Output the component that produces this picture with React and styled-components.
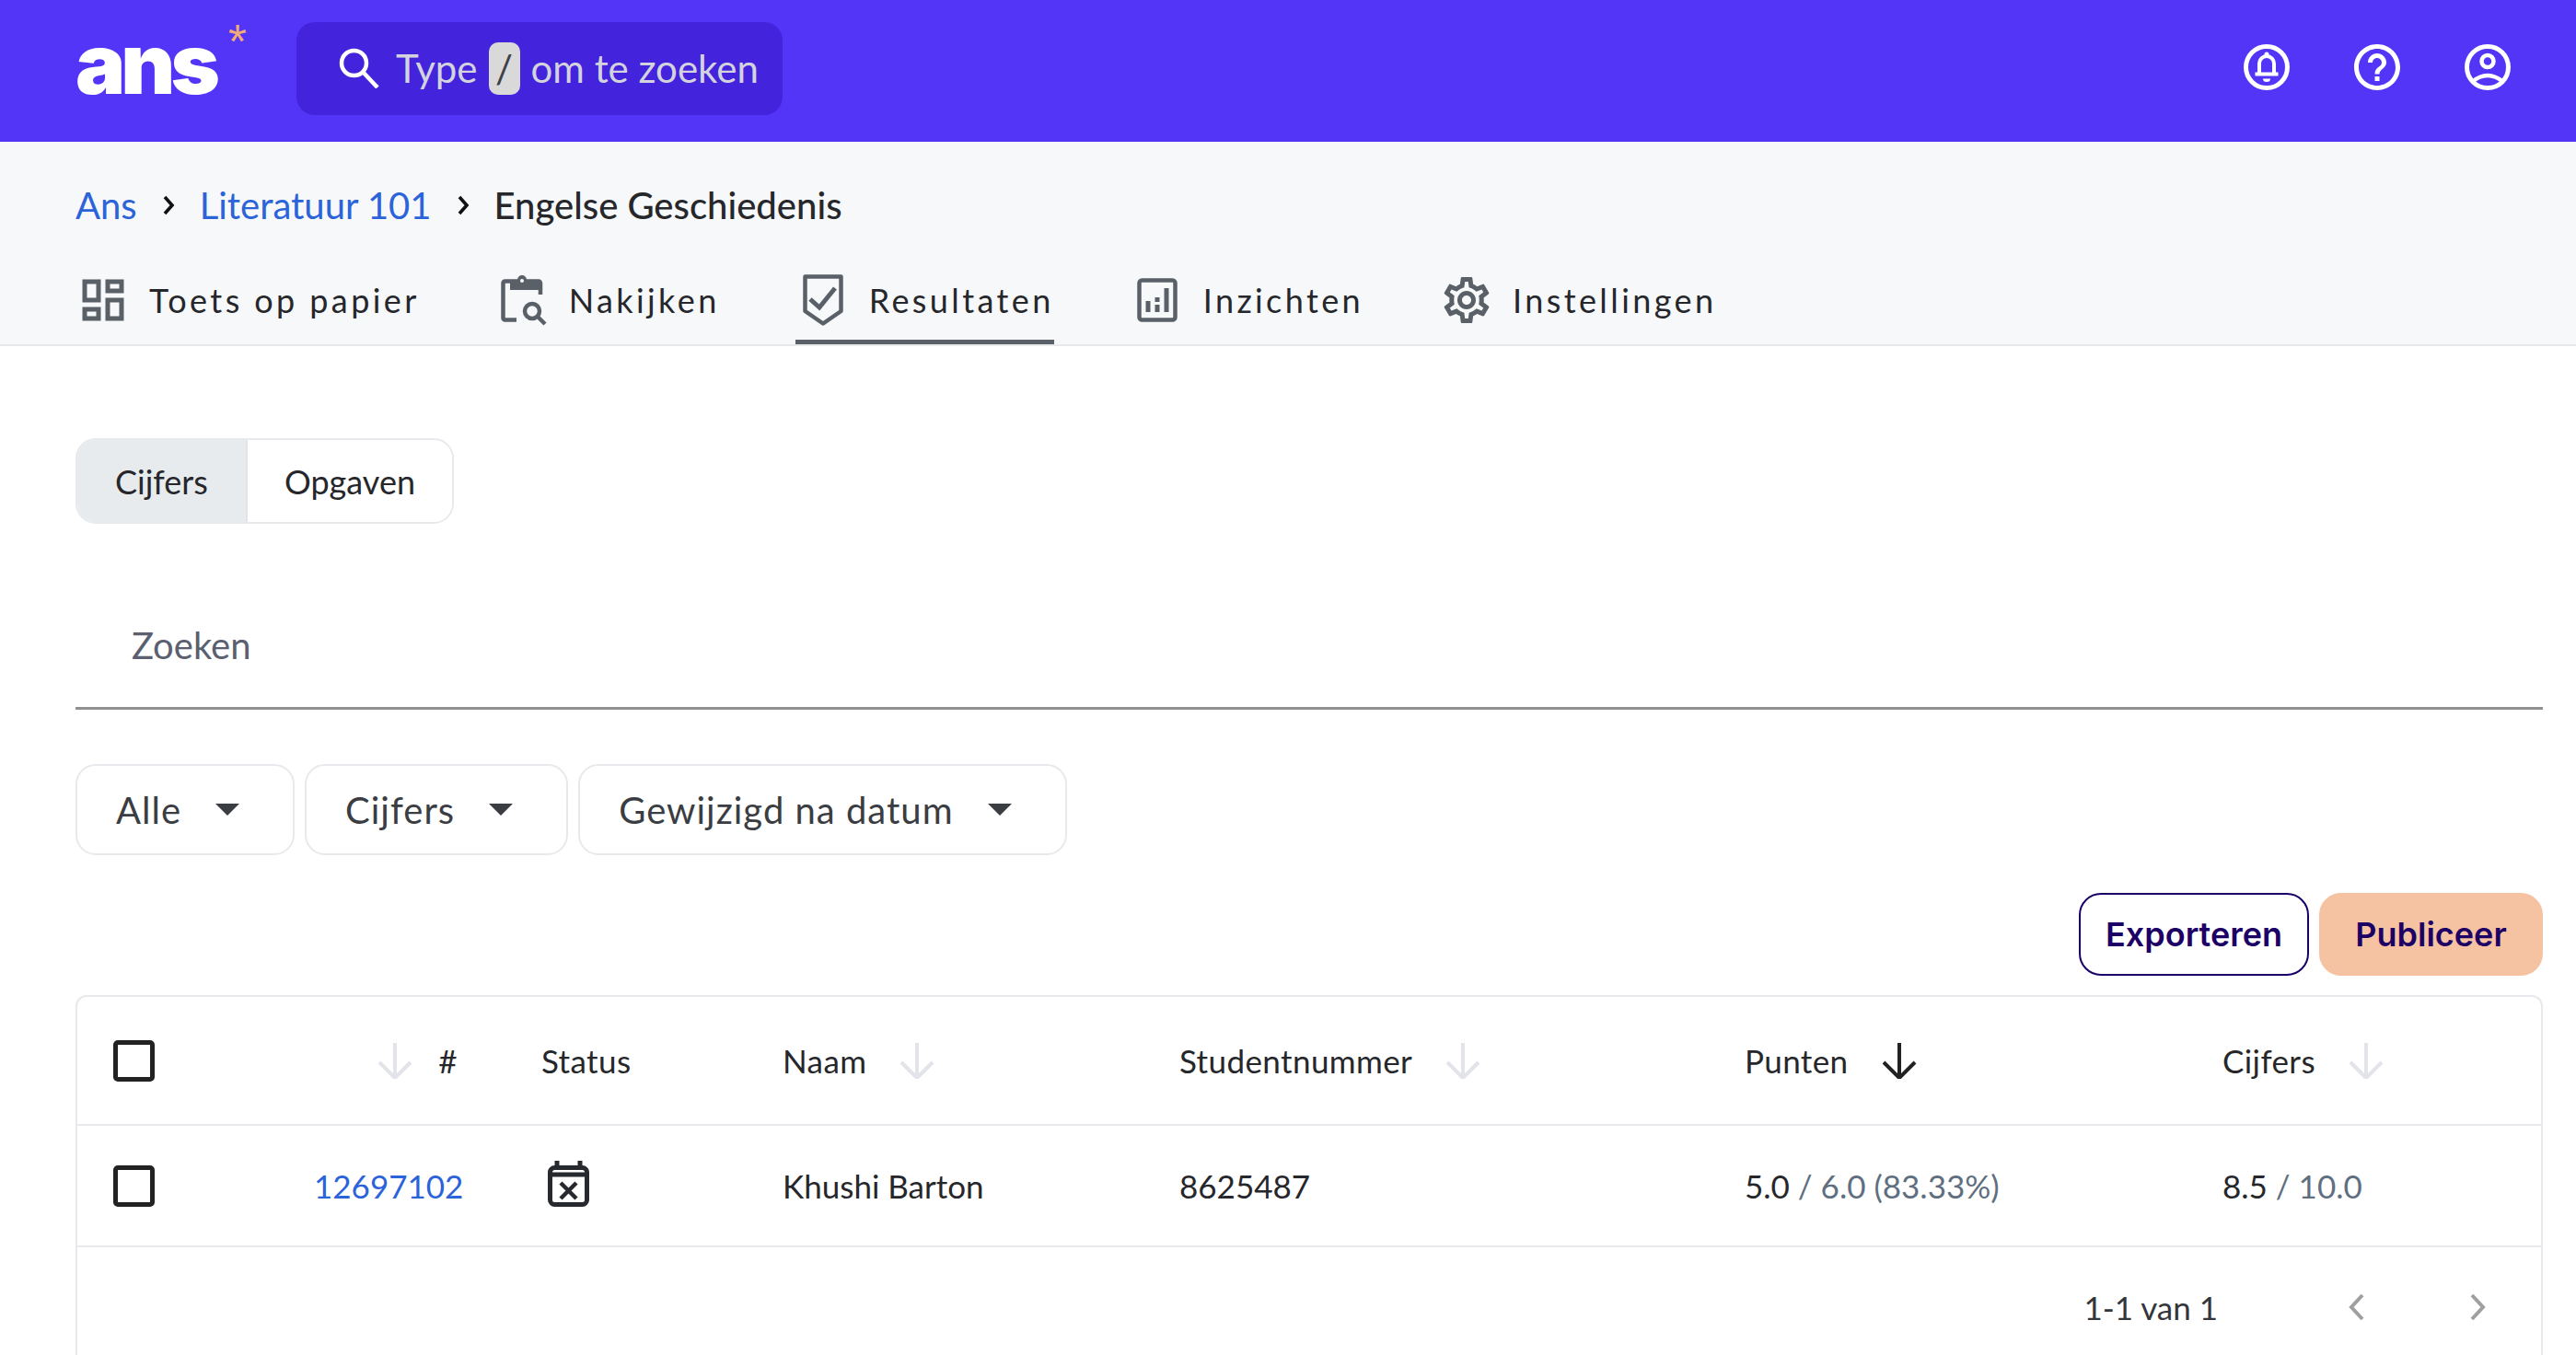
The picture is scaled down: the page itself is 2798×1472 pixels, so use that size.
import styled, { createGlobalStyle } from "styled-components";

const GlobalStyle = createGlobalStyle`
    html, body {
        margin: 0;
        padding: 0;
        background: #ffffff;
    }
    * {
        box-sizing: border-box;
    }
`;

const columns = "218px 247px 262px 431px 614px 519px 1fr";

/* Main page */
const Page = styled.div`
    width: 2798px;
    height: 1472px;
    overflow: hidden;
    font-family: "Lato", "Noto Sans", sans-serif;
    color: #26272b;
`;

/* Purple bar on top */
const TopBar = styled.header`
    display: flex;
    align-items: center;
    height: 154px;
    padding: 0 71px 0 82px;
    background-color: #5335f8;
`;

const Logo = styled.div`
    display: flex;
    align-items: flex-start;
    width: 240px;
    height: 76px;
    margin-top: -16px;
`;

const LogoText = styled.span`
    font-family: "Inter", sans-serif;
    font-size: 91px;
    font-weight: 900;
    line-height: 76px;
    letter-spacing: -5px;
    color: #ffffff;
`;

const LogoStar = styled.span`
    margin-left: 14px;
    margin-top: -16px;
    font-family: "Liberation Sans", sans-serif;
    font-size: 52px;
    line-height: 60px;
    color: #f2ab78;
`;

const SearchBox = styled.div`
    display: flex;
    align-items: center;
    width: 528px;
    height: 101px;
    margin-top: -6px;
    padding-left: 46px;
    border-radius: 20px;
    background-color: #4423dc;
    font-size: 42px;
    color: #d3d3de;
`;

const SearchHint = styled.span`
    margin-left: 18px;
`;

const KeyCap = styled.span`
    display: flex;
    align-items: center;
    justify-content: center;
    width: 34px;
    height: 57px;
    margin: 0 12px;
    border-radius: 10px;
    background-color: #d9d9d9;
    color: #3d4045;
    font-size: 42px;
`;

const TopIcons = styled.div`
    display: flex;
    gap: 70px;
    margin-left: auto;
    margin-top: -8px;
`;

const TopIcon = styled.svg`
    display: block;
    width: 50px;
    height: 50px;
    color: #ffffff;
`;

/* Grey part with breadcrumb and tabs */
const SubBar = styled.div`
    padding: 44px 0 0 82px;
    background-color: #f7f8fa;
    border-bottom: 2px solid #e8e9ea;
`;

const Breadcrumb = styled.nav`
    display: flex;
    align-items: center;
    height: 50px;
    margin-bottom: 40px;
    font-size: 40px;
`;

const Crumb = styled.a`
    color: #2b63d9;
`;

const CurrentCrumb = styled.span`
    font-weight: 500;
    color: #26272b;
`;

const CrumbArrow = styled.svg`
    display: block;
    width: 14px;
    height: 22px;
    margin: 0 27px;
`;

const Tabs = styled.div`
    display: flex;
    gap: 82px;
`;

const Tab = styled.div`
    display: flex;
    align-items: center;
    gap: 20px;
    padding: 8px 0 13px;
    border-bottom: 5px solid ${(properties) => (properties.$active ? "#5a6068" : "transparent")};
    font-size: 36px;
    letter-spacing: 3.4px;
    color: #26272b;
`;

const TabIcon = styled.svg`
    display: block;
    width: 60px;
    height: 60px;
    color: #5a6068;
`;

/* White content */
const Main = styled.main`
    padding: 100px 36px 0 82px;
`;

const Segments = styled.div`
    display: inline-flex;
    height: 93px;
    border: 2px solid #e8e9ec;
    border-radius: 22px;
    overflow: hidden;
    vertical-align: top;
`;

const Segment = styled.button`
    padding: 0 ${(properties) => (properties.$active ? "41px" : "40px")};
    border: none;
    border-right: ${(properties) => (properties.$active ? "2px solid #e1e3e6" : "none")};
    background-color: ${(properties) => (properties.$active ? "#e8ebee" : "#ffffff")};
    font-family: inherit;
    font-size: 36px;
    color: #26272b;
`;

const SearchInput = styled.input`
    display: block;
    width: 100%;
    height: 112px;
    margin-top: 90px;
    padding: 0 0 26px 61px;
    border: none;
    border-bottom: 3px solid #909090;
    outline: none;
    font-family: inherit;
    font-size: 40px;

    &::placeholder {
        color: #5a6070;
        opacity: 1;
    }
`;

const Filters = styled.div`
    display: flex;
    gap: 11px;
    margin-top: 59px;
`;

const Filter = styled.button`
    display: flex;
    align-items: center;
    height: 99px;
    padding: 0 58px 0 42px;
    border: 2px solid #e8e9ec;
    border-radius: 22px;
    background-color: #ffffff;
    font-family: inherit;
    font-size: 40px;
    letter-spacing: 1px;
    color: #3a3d42;
`;

const Caret = styled.span`
    width: 0;
    height: 0;
    margin-left: 37px;
    border-left: 13px solid transparent;
    border-right: 13px solid transparent;
    border-top: 13px solid #3a3d42;
`;

const Actions = styled.div`
    display: flex;
    justify-content: flex-end;
    gap: 11px;
    margin-top: 41px;
`;

const ActionButton = styled.button`
    height: 90px;
    width: ${(properties) => properties.$width}px;
    border: 2px solid ${(properties) => (properties.$primary ? "#f5c3a2" : "#1a0066")};
    border-radius: 24px;
    background-color: ${(properties) => (properties.$primary ? "#f5c3a2" : "#ffffff")};
    font-family: "Inter", sans-serif;
    font-size: 36px;
    font-weight: 600;
    color: #1d0066;
`;

/* Table */
const Table = styled.div`
    height: 420px;
    margin-top: 21px;
    border: 2px solid #e8e9ec;
    border-bottom: none;
    border-radius: 12px 12px 0 0;
`;

const Row = styled.div`
    display: grid;
    grid-template-columns: ${columns};
    align-items: center;
    height: ${(properties) => properties.$height}px;
    padding-left: 39px;
    border-bottom: 2px solid #e8e9ec;
    font-size: 35px;
`;

const Cell = styled.div`
    display: flex;
    align-items: center;
`;

const NumberHead = styled(Cell)`
    justify-content: flex-end;
    padding-right: 91px;
`;

const HeadLabel = styled.span`
    letter-spacing: 0.4px;
`;

const Checkbox = styled.span`
    display: block;
    width: 45px;
    height: 45px;
    border: 5px solid #222222;
    border-radius: 5px;
`;

const SortIcon = styled.svg`
    display: block;
    width: 40px;
    height: 40px;
    margin: ${(properties) => (properties.$before ? "0 27px 0 0" : "0 0 0 35px")};
    color: ${(properties) => (properties.$active ? "#222222" : "#e2e4e9")};
`;

const RowLink = styled.a`
    color: #2b63d9;
`;

const Muted = styled.span`
    color: #5f6f80;
`;

const CalendarIcon = styled.svg`
    display: block;
    width: 45px;
    height: 50px;
    margin: -4px 0 0 7px;
    color: #26292e;
`;

const Pagination = styled.div`
    display: flex;
    align-items: center;
    justify-content: flex-end;
    height: 130px;
    padding-right: 60px;
    font-size: 35px;
    color: #33363b;
`;

const PageArrow = styled.svg`
    display: block;
    width: 18px;
    height: 30px;
    margin-left: ${(properties) => properties.$gap}px;
    color: #a0a0a0;
`;

const SortArrow = ({ active, before }) => (
    <SortIcon $active={active} $before={before} viewBox="0 0 40 40" fill="none" stroke="currentColor" strokeWidth="4">
        <path d="M20 1V38M3 22l17 17 17-17" />
    </SortIcon>
);

const Chevron = () => (
    <CrumbArrow viewBox="0 0 14 22" fill="none" stroke="#111111" strokeWidth="3.6">
        <path d="M3 2l8 9-8 9" />
    </CrumbArrow>
);

const App = () => {
    return (
        <Page>
            <GlobalStyle />
            <TopBar>
                <Logo>
                    <LogoText>ans</LogoText>
                    <LogoStar>*</LogoStar>
                </Logo>
                <SearchBox>
                    <svg width="44" height="44" viewBox="0 0 44 44" fill="none" stroke="#ffffff" strokeWidth="4.5">
                        <circle cx="16.5" cy="16.5" r="13.5" />
                        <path d="M26 26l16 17" />
                    </svg>
                    <SearchHint>Type</SearchHint>
                    <KeyCap>/</KeyCap>
                    om te zoeken
                </SearchBox>
                <TopIcons>
                    <TopIcon viewBox="0 0 50 50" fill="none" stroke="currentColor" strokeWidth="5">
                        <circle cx="25" cy="25" r="22.5" />
                        <path d="M17 31V21a8 8 0 0 1 16 0V31" strokeWidth="4" />
                        <circle cx="25" cy="11" r="2.5" fill="currentColor" stroke="none" />
                        <rect x="12.5" y="30.5" width="25" height="4" fill="currentColor" stroke="none" />
                        <path d="M21 37.500h8a4 3.500 0 0 1-8 0z" fill="currentColor" stroke="none" />
                    </TopIcon>
                    <TopIcon viewBox="2 2 20 20" fill="currentColor">
                        <path d="M11 18h2v-2h-2v2zm1-16C6.480 2 2 6.480 2 12s4.480 10 10 10 10-4.480 10-10S17.520 2 12 2zm0 18c-4.410 0-8-3.590-8-8s3.590-8 8-8 8 3.590 8 8-3.590 8-8 8zm0-14c-2.210 0-4 1.790-4 4h2c0-1.100.9-2 2-2s2 .9 2 2c0 2-3 1.750-3 5h2c0-2.250 3-2.500 3-5 0-2.210-1.790-4-4-4z" />
                    </TopIcon>
                    <TopIcon viewBox="0 0 50 50" fill="none" stroke="currentColor" strokeWidth="5">
                        <circle cx="25" cy="25" r="22.5" />
                        <circle cx="25" cy="18.500" r="6.500" strokeWidth="4.500" />
                        <path d="M8 41Q25 27 42 41" strokeWidth="4.500" />
                    </TopIcon>
                </TopIcons>
            </TopBar>

            <SubBar>
                <Breadcrumb>
                    <Crumb>Ans</Crumb>
                    <Chevron />
                    <Crumb>Literatuur 101</Crumb>
                    <Chevron />
                    <CurrentCrumb>Engelse Geschiedenis</CurrentCrumb>
                </Breadcrumb>
                <Tabs>
                    <Tab>
                        <TabIcon viewBox="0 0 24 24" fill="currentColor">
                            <path d="M19 5v2h-4V5h4M9 5v6H5V5h4m10 8v6h-4v-6h4M9 17v2H5v-2h4M21 3h-8v6h8V3zM11 3H3v10h8V3zm10 8h-8v10h8V11zm-10 4H3v6h8v-6z" />
                        </TabIcon>
                        Toets op papier
                    </Tab>
                    <Tab>
                        <TabIcon viewBox="0 0 60 60" fill="none" stroke="currentColor" strokeWidth="4.500">
                            <g transform="translate(6 2)">
                                <path d="M17 49.500H4.500a2 2 0 0 1-2-2V9.500a2 2 0 0 1 2-2H41a2 2 0 0 1 2 2V22" />
                                <path d="M10 6h8a5 5 0 0 1 10 0h13v11H10z" fill="currentColor" stroke="none" />
                                <circle cx="23" cy="7" r="2" fill="#f7f8fa" stroke="none" />
                                <circle cx="34" cy="40" r="8" />
                                <path d="M40 46l8 8" />
                            </g>
                        </TabIcon>
                        Nakijken
                    </Tab>
                    <Tab $active>
                        <TabIcon viewBox="0 0 60 60" fill="none" stroke="currentColor" strokeWidth="4.500" strokeLinejoin="round">
                            <g transform="translate(8 2)">
                                <path d="M2.500 2.500h39V40L22 53.500 2.500 40z" />
                                <path d="M8 27l10 9 17-21" strokeWidth="5" strokeLinejoin="miter" />
                            </g>
                        </TabIcon>
                        Resultaten
                    </Tab>
                    <Tab>
                        <TabIcon viewBox="0 0 60 60" fill="none" stroke="currentColor" strokeWidth="4.500">
                            <g transform="translate(8 6)">
                                <rect x="2.500" y="2.500" width="39" height="43" rx="3" />
                                <path d="M12 37V25M22 37V29M22 26V21M32 37V11" strokeWidth="5" />
                            </g>
                        </TabIcon>
                        Inzichten
                    </Tab>
                    <Tab>
                        <TabIcon viewBox="0 0 24 24" fill="currentColor">
                            <path d="M19.430 12.980c.04-.32.07-.64.07-.98 0-.34-.03-.66-.07-.98l2.110-1.650c.19-.15.24-.42.12-.64l-2-3.460c-.09-.16-.26-.25-.44-.25-.06 0-.12.01-.17.03l-2.490 1c-.52-.4-1.080-.73-1.690-.98l-.38-2.650C14.460 2.180 14.250 2 14 2h-4c-.25 0-.46.18-.49.42l-.38 2.650c-.61.25-1.170.59-1.690.98l-2.490-1c-.06-.02-.12-.03-.18-.03-.17 0-.34.09-.43.25l-2 3.460c-.13.22-.07.49.12.64l2.110 1.650c-.04.32-.07.65-.07.98 0 .33.03.66.07.98l-2.110 1.650c-.19.15-.24.42-.12.64l2 3.460c.09.16.26.25.44.25.06 0 .12-.01.17-.03l2.490-1c.52.4 1.080.73 1.690.98l.38 2.650c.03.24.24.42.49.42h4c.25 0 .46-.18.49-.42l.38-2.650c.61-.25 1.170-.59 1.690-.98l2.490 1c.06.02.12.03.18.03.17 0 .34-.09.43-.25l2-3.460c.12-.22.07-.49-.12-.64l-2.110-1.650zm-1.980-1.710c.04.31.05.52.05.73 0 .21-.02.43-.05.73l-.14 1.130.89.7 1.080.84-.7 1.210-1.270-.51-1.040-.42-.9.68c-.43.32-.84.56-1.250.73l-1.060.43-.16 1.130-.2 1.350h-1.400l-.19-1.350-.16-1.130-1.060-.43c-.43-.18-.83-.41-1.230-.71l-.91-.7-1.060.43-1.270.51-.7-1.210 1.080-.84.89-.7-.14-1.130c-.03-.31-.05-.54-.05-.74s.02-.43.05-.73l.14-1.130-.89-.7-1.080-.84.7-1.210 1.270.51 1.040.42.9-.68c.43-.32.84-.56 1.250-.73l1.060-.43.16-1.130.2-1.350h1.390l.19 1.350.16 1.130 1.060.43c.43.18.83.41 1.230.71l.91.7 1.060-.43 1.270-.51.7 1.210-1.070.85-.89.7.14 1.130zM12 8c-2.210 0-4 1.790-4 4s1.790 4 4 4 4-1.790 4-4-1.790-4-4-4zm0 6c-1.100 0-2-.9-2-2s.9-2 2-2 2 .9 2 2-.9 2-2 2z" />
                        </TabIcon>
                        Instellingen
                    </Tab>
                </Tabs>
            </SubBar>

            <Main>
                <Segments>
                    <Segment $active>Cijfers</Segment>
                    <Segment>Opgaven</Segment>
                </Segments>

                <SearchInput placeholder="Zoeken" />

                <Filters>
                    <Filter>Alle<Caret /></Filter>
                    <Filter>Cijfers<Caret /></Filter>
                    <Filter>Gewijzigd na datum<Caret /></Filter>
                </Filters>

                <Actions>
                    <ActionButton $width={250}>Exporteren</ActionButton>
                    <ActionButton $width={243} $primary>Publiceer</ActionButton>
                </Actions>

                <Table>
                    <Row $height={140}>
                        <Cell><Checkbox /></Cell>
                        <NumberHead>
                            <SortArrow before />
                            <HeadLabel>#</HeadLabel>
                        </NumberHead>
                        <Cell><HeadLabel>Status</HeadLabel></Cell>
                        <Cell><HeadLabel>Naam</HeadLabel><SortArrow /></Cell>
                        <Cell><HeadLabel>Studentnummer</HeadLabel><SortArrow /></Cell>
                        <Cell><HeadLabel>Punten</HeadLabel><SortArrow active /></Cell>
                        <Cell><HeadLabel>Cijfers</HeadLabel><SortArrow /></Cell>
                    </Row>
                    <Row $height={132}>
                        <Cell><Checkbox /></Cell>
                        <Cell><RowLink>12697102</RowLink></Cell>
                        <Cell>
                            <CalendarIcon viewBox="0 0 45 50" fill="none" stroke="currentColor" strokeWidth="5">
                                <rect x="2.500" y="7.500" width="40" height="40" rx="5" />
                                <path d="M10 0V7M35 0V7M2 15H43" />
                                <path d="M14 24l17 17M31 24L14 41" strokeWidth="4.500" />
                            </CalendarIcon>
                        </Cell>
                        <Cell>Khushi Barton</Cell>
                        <Cell>8625487</Cell>
                        <Cell><span>5.0&nbsp;<Muted>/ 6.0 (83.33%)</Muted></span></Cell>
                        <Cell><span>8.5&nbsp;<Muted>/ 10.0</Muted></span></Cell>
                    </Row>
                    <Pagination>
                        1-1 van 1
                        <PageArrow $gap={142} viewBox="0 0 18 30" fill="none" stroke="currentColor" strokeWidth="4">
                            <path d="M15 2L3 15l12 13" />
                        </PageArrow>
                        <PageArrow $gap={113} viewBox="0 0 18 30" fill="none" stroke="currentColor" strokeWidth="4">
                            <path d="M3 2l12 13L3 28" />
                        </PageArrow>
                    </Pagination>
                </Table>
            </Main>
        </Page>
    );
};

export default App;
